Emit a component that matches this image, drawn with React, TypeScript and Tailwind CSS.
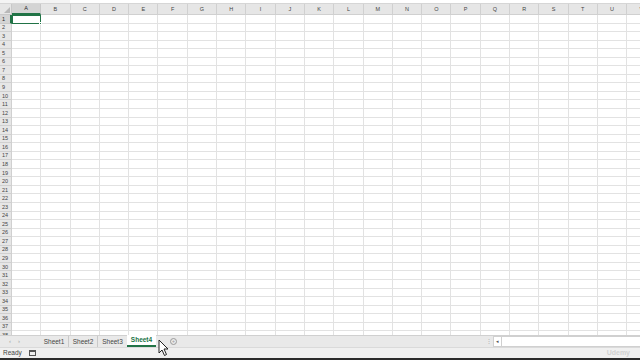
import { Fragment } from "react"

const cols = "ABCDEFGHIJKLMNOPQRSTUV".split("")
const rows = Array.from({ length: 38 }, (_, i) => i + 1)
const tabs = ["Sheet1", "Sheet2", "Sheet3"]

const Grid = () => {
  return (
    <div className="grid grid-cols-[12px_repeat(22,29.3px)] grid-rows-[11px_repeat(38,8.55px)] overflow-hidden h-[331px]">
      <div className="bg-[#e6e6e6] border-r border-b border-[#c8c8c8] relative">
        <div className="absolute right-[1px] bottom-[1px] w-0 h-0 border-l-[6px] border-l-transparent border-b-[6px] border-b-[#b8b8b8]" />
      </div>
      {cols.map((c) => (
        <div
          key={c}
          className={
            c === "A"
              ? "bg-[#d4d4d4] border-r border-[#c8c8c8] border-b-2 border-b-[#217346] flex items-center justify-center text-[5.5px] text-[#262626]"
              : "bg-[#e6e6e6] border-r border-b border-[#d0d0d0] flex items-center justify-center text-[5.5px] text-[#444]"
          }
        >
          {c}
        </div>
      ))}
      {rows.map((r) => (
        <Fragment key={r}>
          <div
            className={
              r === 1
                ? "bg-[#d4d4d4] border-r-2 border-r-[#217346] border-b border-[#c8c8c8] flex items-center pl-[2px] text-[5.5px] text-[#262626] overflow-hidden"
                : "bg-[#e6e6e6] border-r border-b border-[#d0d0d0] flex items-center pl-[2px] text-[5.5px] text-[#444] overflow-hidden"
            }
          >
            {r}
          </div>
          {cols.map((c) => (
            <div
              key={c}
              className={
                r === 1 && c === "A"
                  ? "border border-[#217346] relative"
                  : "border-r border-b border-[#e2e2e2]"
              }
            >
              {r === 1 && c === "A" && (
                <div className="absolute -right-[2px] -bottom-[2px] w-[3px] h-[3px] bg-[#217346] border border-white" />
              )}
            </div>
          ))}
        </Fragment>
      ))}
    </div>
  )
}

const Cursor = () => (
  <svg className="absolute left-[158px] top-[339px]" width="12" height="18" viewBox="0 0 12 18">
    <path d="M1 1 L1 14 L4 11 L6.5 16.5 L8.5 15.5 L6 10 L10 10 Z" fill="#fff" stroke="#222" strokeWidth="1" strokeLinejoin="round" />
  </svg>
)

export default function App() {
  return (
    <div className="w-[640px] h-[360px] bg-white relative overflow-hidden font-['Liberation_Sans',Arial,sans-serif] flex flex-col">
      <div className="h-[4px] bg-white border-b border-[#d6d6d6] flex">
        <div className="w-[70px] bg-[#f4f4f4]" />
      </div>
      <Grid />
      <div className="h-[12px] bg-[#e9e9e9] border-t border-[#d0d0d0] flex items-stretch text-[6.5px] text-[#444]">
        <div className="w-[40px] flex items-center gap-[7px] pl-[9px] text-[#a0a0a0] text-[6px]">
          <span>‹</span>
          <span>›</span>
        </div>
        {tabs.map((t, i) => (
          <div key={t} className={i < 2 ? "w-[29px] flex items-center justify-center border-r border-[#c9c9c9]" : "w-[29px] flex items-center justify-center"}>
            {t}
          </div>
        ))}
        <div className="w-[29px] flex items-center justify-center bg-white text-[#217346] font-bold border-b-2 border-[#217346] -mt-px">
          Sheet4
        </div>
        <div className="ml-[14px] flex items-center">
          <div className="w-[7px] h-[7px] rounded-full border border-[#9a9a9a] flex items-center justify-center text-[5px] leading-none text-[#9a9a9a]">
            +
          </div>
        </div>
        <div className="flex-1" />
        <div className="w-[8px] flex items-center justify-center text-[#aaa] text-[6px]">⋮</div>
        <div className="w-[9px] flex items-center justify-center bg-white border border-[#d0d0d0] text-[5px] text-[#555]">◂</div>
        <div className="w-[138px] bg-white border-y border-[#d0d0d0]" />
      </div>
      <div className="h-[11px] bg-[#f0f0f0] border-t border-[#dadada] flex items-center text-[6.5px] text-[#444] pl-[3px]">
        <span>Ready</span>
        <svg className="ml-[7px]" width="7" height="6" viewBox="0 0 7 6">
          <rect x="0.5" y="0.5" width="6" height="5" fill="none" stroke="#555" strokeWidth="1" />
          <rect x="0.5" y="0.5" width="6" height="1.5" fill="#555" />
        </svg>
        <div className="flex-1" />
        <span className="mr-[10px] text-[#d2d2d2] font-bold text-[7px]">Udemy</span>
      </div>
      <div className="flex-1 bg-[#2b2b2b]" />
      <Cursor />
    </div>
  )
}
